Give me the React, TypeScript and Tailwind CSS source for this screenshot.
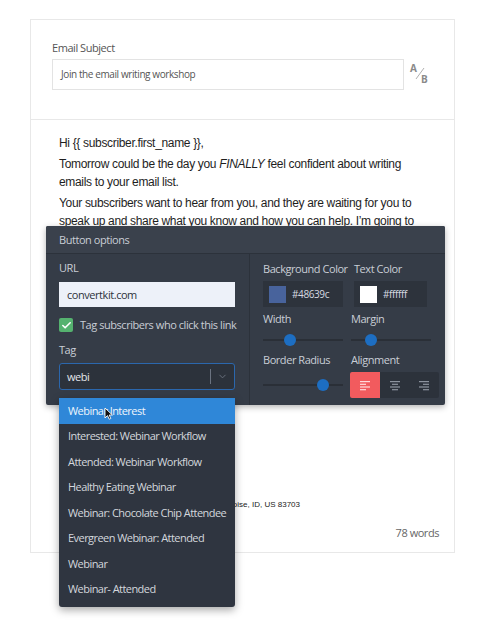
import { Check, ChevronDown } from 'lucide-react';

const ui = "font-['Open_Sans',sans-serif]";

const tags = [
  'Webinar Interest',
  'Interested: Webinar Workflow',
  'Attended: Webinar Workflow',
  'Healthy Eating Webinar',
  'Webinar: Chocolate Chip Attendee',
  'Evergreen Webinar: Attended',
  'Webinar',
  'Webinar- Attended',
];

function Slider({ pos }: { pos: number }) {
  return (
    <div className="relative h-[12px] w-[80px] flex items-center">
      <div className="h-[2px] w-full bg-[#2a2f37]" />
      <div
        className="absolute top-0 h-[12px] w-[12px] rounded-full bg-[#1d6ec2]"
        style={{ left: pos - 6 }}
      />
    </div>
  );
}

function AlignIcon({ kind }: { kind: 'left' | 'center' | 'right' }) {
  const rows = [10, 6, 10, 6];
  return (
    <svg width="12" height="11" viewBox="0 0 12 11">
      {rows.map((w, i) => {
        const x = kind === 'left' ? 1 : kind === 'right' ? 11 - w : 6 - w / 2;
        return <rect key={i} x={x} y={1 + i * 2.7} width={w} height="1.2" fill="currentColor" />;
      })}
    </svg>
  );
}

function ColorField({ swatch, value, width }: { swatch: string; value: string; width: string }) {
  return (
    <div className={`flex h-[26px] items-center gap-[6px] bg-[#2d333c] px-[6px] ${width}`}>
      <div className="h-[17px] w-[17px]" style={{ backgroundColor: swatch }} />
      <span className="text-[10px] tracking-[-0.4px] text-[#d6dae0]">{value}</span>
    </div>
  );
}

function ButtonOptions() {
  return (
    <div className={`absolute left-[15px] top-[106px] w-[399px] h-[179px] flex flex-col bg-[#353c47] rounded-[2px] shadow-[0_2px_6px_rgba(0,0,0,0.3)] ${ui} text-[11px] tracking-[-0.45px] whitespace-nowrap`}>
      <div className="h-[28px] flex items-center px-[13px] bg-[#3a414c] border-b border-[#2c323b] text-[#c9ced6] rounded-t-[2px]">
        Button options
      </div>
      <div className="flex flex-1">
        {/* left column */}
        <div className="w-[204px] px-[13px] pt-[7px] border-r border-[#2c323b]">
          <div className="h-[14px] leading-[14px] text-[#c9ced6]">URL</div>
          <div className="mt-[7px] h-[25px] w-[176px] flex items-center bg-[#edf1f9] px-[8px] text-[#2d333c]">
            convertkit.com
          </div>
          <div className="mt-[11px] h-[14px] flex items-center gap-[7px]">
            <div className="h-[14px] w-[14px] shrink-0 rounded-[2px] bg-[#55b26f] flex items-center justify-center">
              <Check size={11} strokeWidth={3.5} color="#ffffff" />
            </div>
            <span className="text-[#c9ced6]">Tag subscribers who click this link</span>
          </div>
          <div className="mt-[11px] h-[14px] leading-[14px] text-[#c9ced6]">Tag</div>
          <div className="mt-[6px] h-[27px] w-[176px] flex items-center rounded-[3px] border border-[#2b67ad] bg-[#2c323b] pl-[7px] pr-[6px] text-[#e3e6ea]">
            <span className="flex-1">webi</span>
            <div className="h-[15px] w-px bg-[#6b7380]" />
            <ChevronDown size={11} color="#6b7380" className="ml-[6px]" />
          </div>
        </div>
        {/* right column */}
        <div className="flex-1 pl-[13px] pt-[8px] text-[#c9ced6]">
          <div className="grid grid-cols-[80px_88px] gap-x-[8px]">
            <div className="h-[14px] leading-[14px]">Background Color</div>
            <div className="h-[14px] leading-[14px] pl-[3px]">Text Color</div>
            <div className="mt-[5px]">
              <ColorField swatch="#48639c" value="#48639c" width="w-[80px]" />
            </div>
            <div className="mt-[5px] pl-[3px]">
              <ColorField swatch="#ffffff" value="#ffffff" width="w-[73px]" />
            </div>
            <div className="mt-[5px] h-[14px] leading-[14px]">Width</div>
            <div className="mt-[5px] h-[14px] leading-[14px]">Margin</div>
            <div className="mt-[8px]"><Slider pos={27} /></div>
            <div className="mt-[8px]"><Slider pos={20} /></div>
            <div className="mt-[7px] h-[14px] leading-[14px]">Border Radius</div>
            <div className="mt-[7px] h-[14px] leading-[14px]">Alignment</div>
            <div className="mt-[12px]"><Slider pos={60} /></div>
            <div className="mt-[5px] -ml-[1px] flex h-[26px] w-[89px] bg-[#2c323b] rounded-[2px] overflow-hidden">
              <div className="w-[30px] flex items-center justify-center bg-[#f25b5e] text-[#ffd9da]">
                <AlignIcon kind="left" />
              </div>
              <div className="w-[29px] flex items-center justify-center text-[#8c939e]">
                <AlignIcon kind="center" />
              </div>
              <div className="w-[30px] flex items-center justify-center text-[#8c939e]">
                <AlignIcon kind="right" />
              </div>
            </div>
          </div>
        </div>
      </div>
    </div>
  );
}

function TagDropdown() {
  return (
    <div className={`absolute left-[28px] top-[278px] w-[176px] pb-[5px] bg-[#2f3540] rounded-b-[3px] shadow-[0_3px_8px_rgba(0,0,0,0.35)] ${ui} text-[11px] tracking-[-0.55px] whitespace-nowrap`}>
      {tags.map((t, i) => (
        <div
          key={t}
          className={
            i === 0
              ? 'relative h-[25.5px] flex items-center px-[9px] bg-[#2f87d8] text-[#eef5fc]'
              : 'h-[25.5px] flex items-center px-[9px] text-[#d3d7dd]'
          }
        >
          {t}
          {i === 0 && (
            <svg className="absolute left-[45px] top-[9px]" width="9" height="13" viewBox="0 0 9 13">
              <path d="M1 1 L1 11 L3.5 8.6 L5.2 12.2 L6.8 11.5 L5.2 8 L8.4 8 Z" fill="#111" stroke="#fff" strokeWidth="0.9" />
            </svg>
          )}
        </div>
      ))}
    </div>
  );
}

export default function App() {
  return (
    <div className="min-h-screen bg-white pt-[19px] pl-[30px]">
      <div className="w-[425px] border border-[#e8e8e8] bg-white">
        {/* subject */}
        <div className={`h-[100px] border-b border-[#e8e8e8] pt-[20px] pl-[21px] ${ui}`}>
          <div className="h-[16px] leading-[16px] text-[11px] tracking-[-0.45px] text-[#555]">Email Subject</div>
          <div className="mt-[3px] flex items-start">
            <div className="h-[31px] w-[352px] flex items-center border border-[#e3e3e3] pl-[8px] text-[10px] tracking-[-0.4px] text-[#555]">
              Join the email writing workshop
            </div>
            <div className="relative ml-[6px] mt-[4px] h-[22px] w-[20px] text-[10px] font-bold text-[#8a8a8a]">
              <span className="absolute left-0 top-0 leading-[10px]">A</span>
              <svg className="absolute left-[4px] top-[4px]" width="12" height="14" viewBox="0 0 12 14">
                <line x1="10" y1="1" x2="2" y2="12" stroke="#9a9a9a" strokeWidth="0.8" />
              </svg>
              <span className="absolute left-[11px] top-[11px] leading-[10px]">B</span>
            </div>
          </div>
        </div>
        {/* body */}
        <div className="relative h-[432px] flex flex-col pt-[14px] pl-[28px] pr-[15px] font-['Liberation_Sans',Arial,sans-serif] text-[12px] leading-[18px] tracking-[-0.33px] text-[#1e1e1e]">
          <p className="mb-[3px]">Hi {'{{'} subscriber.first_name {'}}'},</p>
          <p className="mb-[3px] w-[350px]">
            Tomorrow could be the day you <em>FINALLY</em> feel confident about writing emails to your email list.
          </p>
          <p className="w-[370px]">
            Your subscribers want to hear from you, and they are waiting for you to speak up and share what you know and how you can help. I’m going to show you how.
          </p>
          <div className="flex-1" />
          <div className="w-[241px] whitespace-nowrap text-right text-[8px] leading-[10px] tracking-normal text-[#222]">
            Send Ahead LLC, 1200 W Main St, Boise, ID, US 83703
          </div>
          <div className={`mt-[14px] mb-[10px] text-right text-[11px] tracking-[-0.45px] text-[#666] ${ui}`}>78 words</div>
          <ButtonOptions />
          <TagDropdown />
        </div>
      </div>
    </div>
  );
}
